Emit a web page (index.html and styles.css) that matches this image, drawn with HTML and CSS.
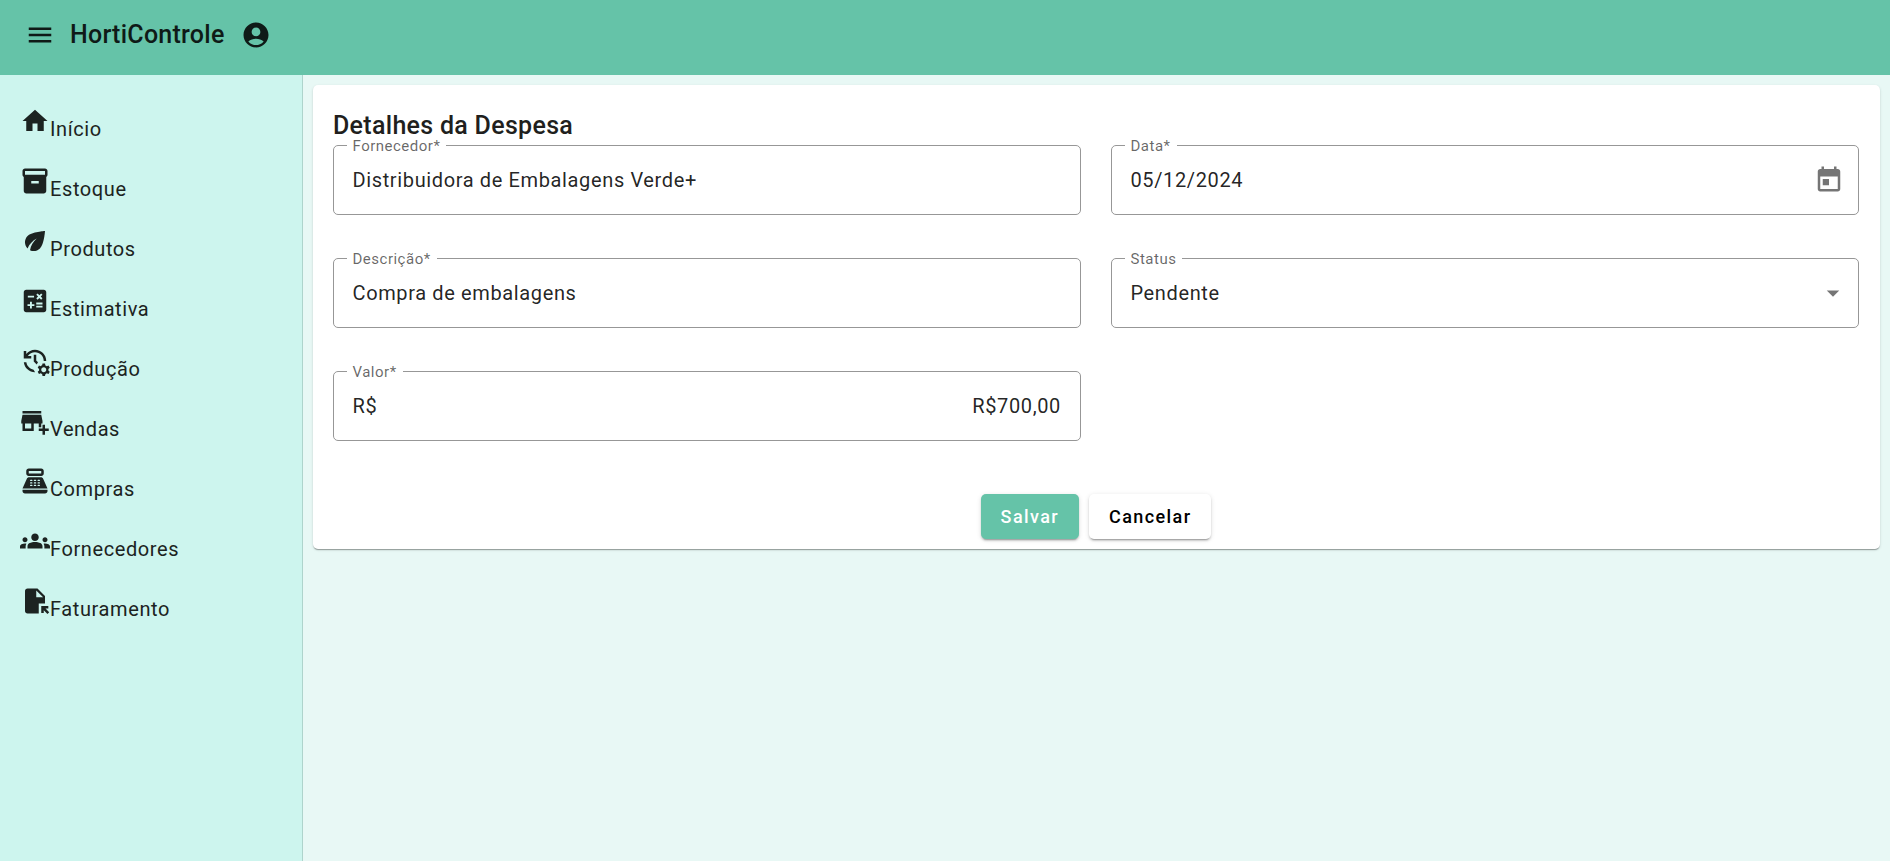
FILE: index.html
```html
<!DOCTYPE html>
<html lang="pt-BR">
<head>
<meta charset="utf-8">
<title>HortiControle</title>
<link rel="stylesheet" href="styles.css">
</head>
<body>
<header class="topbar">
  <svg class="icon" viewBox="0 0 24 24"><path d="M3 18h18v-2H3v2zm0-5h18v-2H3v2zm0-7v2h18V6H3z"/></svg>
  <span class="brand">HortiControle</span>
  <svg class="icon" viewBox="0 0 24 24"><path d="M12 2C6.48 2 2 6.48 2 12s4.48 10 10 10 10-4.48 10-10S17.52 2 12 2zm0 4c1.93 0 3.5 1.57 3.5 3.5S13.93 13 12 13s-3.5-1.57-3.5-3.5S10.07 6 12 6zm0 14c-2.03 0-4.43-.82-6.14-2.88C7.55 15.8 9.68 15 12 15s4.45.8 6.14 2.12C16.43 19.18 14.03 20 12 20z"/></svg>
</header>
<div class="shell">
  <nav class="sidebar">
    <a class="nav-item"><svg class="icon" viewBox="0 0 24 24"><path d="M10 20v-6h4v6h5v-8h3L12 3 2 12h3v8z"/></svg><span>Início</span></a>
    <a class="nav-item"><svg class="icon" viewBox="0 0 24 24"><path d="M20 2H4c-1 0-2 .9-2 2v3.01c0 .72.43 1.34 1 1.69V20c0 1.1 1.1 2 2 2h14c.9 0 2-.9 2-2V8.7c.57-.35 1-.97 1-1.69V4c0-1.1-1-2-2-2zm-5 12H9v-2h6v2zm5-7H4V4l16-.02V7z"/></svg><span>Estoque</span></a>
    <a class="nav-item"><svg class="icon" viewBox="0 0 24 24"><path d="M6.05 8.05c-2.73 2.73-2.73 7.15-.02 9.88 1.47-3.4 4.09-6.24 7.36-7.93-2.77 2.34-4.71 5.61-5.39 9.32 2.6 1.23 5.8.78 7.95-1.37C19.43 14.47 20 4 20 4S9.53 4.57 6.05 8.05z"/></svg><span>Produtos</span></a>
    <a class="nav-item"><svg class="icon" viewBox="0 0 24 24"><path d="M19 3H5c-1.1 0-2 .9-2 2v14c0 1.1.9 2 2 2h14c1.1 0 2-.9 2-2V5c0-1.1-.9-2-2-2zm-5.97 4.06L14.09 6l1.41 1.41L16.91 6l1.06 1.06-1.41 1.41 1.41 1.41-1.06 1.06-1.41-1.4-1.41 1.41-1.06-1.06 1.41-1.41-1.41-1.42zm-6.78.66h5v1.5h-5v-1.5zM11.5 16h-2v2H8v-2H6v-1.5h2v-2h1.5v2h2V16zm6.5 1.25h-5v-1.5h5v1.5zm0-2.5h-5v-1.5h5v1.5z"/></svg><span>Estimativa</span></a>
    <a class="nav-item"><svg class="icon" viewBox="0 0 24 24"><path d="M22.69 18.37l1.14-1-1-1.73-1.45.49c-.32-.27-.68-.48-1.08-.63L20 14h-2l-.3 1.49c-.4.15-.76.36-1.08.63l-1.45-.49-1 1.73 1.14 1c-.08.5-.08.76 0 1.26l-1.14 1 1 1.73 1.45-.49c.32.27.68.48 1.08.63L18 24h2l.3-1.49c.4-.15.76-.36 1.08-.63l1.45.49 1-1.73-1.14-1c.08-.51.08-.77 0-1.27zM19 21c-1.1 0-2-.9-2-2s.9-2 2-2 2 .9 2 2-.9 2-2 2zM11 7v5.41l2.36 2.36 1.04-1.79-1.4-1.39V7h-2zm10 5c0-4.97-4.03-9-9-9-2.83 0-5.35 1.32-7 3.36V4H3v6h6V8H6.26C7.53 6.19 9.63 5 12 5c3.86 0 7 3.14 7 7h2zm-10.14 6.91c-2.99-.49-5.35-2.9-5.78-5.91H3.06c.5 4.5 4.31 8 8.94 8h.07l-1.21-2.09z"/></svg><span>Produção</span></a>
    <a class="nav-item"><svg class="icon" viewBox="0 0 24 24"><path d="M15 17h2v-3h1v-2l-1-5H2l-1 5v2h1v6h9v-6h4v3zm-6 1H4v-4h5v4zM2 4h15v2H2z"/><path d="M20 18v-3h-2v3h-3v2h3v3h2v-3h3v-2z"/></svg><span>Vendas</span></a>
    <a class="nav-item"><svg class="icon" viewBox="0 0 24 24"><path d="M17 2H7c-1.1 0-2 .9-2 2v2c0 1.1.9 2 2 2h10c1.1 0 2-.9 2-2V4c0-1.1-.9-2-2-2zm0 4H7V4h10v2zm3 16H4c-1.1 0-2-.9-2-2v-1h20v1c0 1.1-.9 2-2 2zm-1.47-11.81C18.21 9.47 17.49 9 16.7 9H7.3c-.79 0-1.51.47-1.83 1.19L2 18h20l-3.47-7.81zM9.5 16h-1c-.28 0-.5-.22-.5-.5s.22-.5.5-.5h1c.28 0 .5.22.5.5s-.22.5-.5.5zm0-2h-1c-.28 0-.5-.22-.5-.5s.22-.5.5-.5h1c.28 0 .5.22.5.5s-.22.5-.5.5zm0-2h-1c-.28 0-.5-.22-.5-.5s.22-.5.5-.5h1c.28 0 .5.22.5.5s-.22.5-.5.5zm3 4h-1c-.28 0-.5-.22-.5-.5s.22-.5.5-.5h1c.28 0 .5.22.5.5s-.22.5-.5.5zm0-2h-1c-.28 0-.5-.22-.5-.5s.22-.5.5-.5h1c.28 0 .5.22.5.5s-.22.5-.5.5zm0-2h-1c-.28 0-.5-.22-.5-.5s.22-.5.5-.5h1c.28 0 .5.22.5.5s-.22.5-.5.5zm3 4h-1c-.28 0-.5-.22-.5-.5s.22-.5.5-.5h1c.28 0 .5.22.5.5s-.22.5-.5.5zm0-2h-1c-.28 0-.5-.22-.5-.5s.22-.5.5-.5h1c.28 0 .5.22.5.5s-.22.5-.5.5zm0-2h-1c-.28 0-.5-.22-.5-.5s.22-.5.5-.5h1c.28 0 .5.22.5.5s-.22.5-.5.5z"/></svg><span>Compras</span></a>
    <a class="nav-item"><svg class="icon" viewBox="0 0 24 24"><path d="M12 12.75c1.63 0 3.07.39 4.24.9 1.08.48 1.76 1.56 1.76 2.73V18H6v-1.61c0-1.18.68-2.26 1.76-2.73 1.17-.52 2.61-.91 4.24-.91zM4 13c1.1 0 2-.9 2-2s-.9-2-2-2-2 .9-2 2 .9 2 2 2zm1.13 1.1c-.37-.06-.74-.1-1.13-.1-.99 0-1.93.21-2.78.58C.48 14.9 0 15.62 0 16.43V18h4.5v-1.61c0-.83.23-1.61.63-2.29zM20 13c1.1 0 2-.9 2-2s-.9-2-2-2-2 .9-2 2 .9 2 2 2zm4 3.43c0-.81-.48-1.53-1.22-1.85-.85-.37-1.79-.58-2.78-.58-.39 0-.76.04-1.13.1.4.68.63 1.46.63 2.29V18H24v-1.57zM12 6c1.66 0 3 1.34 3 3s-1.34 3-3 3-3-1.34-3-3 1.34-3 3-3z"/></svg><span>Fornecedores</span></a>
    <a class="nav-item"><svg class="icon" viewBox="0 0 24 24"><path d="M14 2H6c-1.1 0-1.99.9-1.99 2L4 20c0 1.1.89 2 1.99 2H15v-8h5V8l-6-6zm-1 7V3.5L18.5 9H13zm4 12.66V16h5.66v2h-2.24l2.95 2.95-1.41 1.41L19 19.41v2.24h-2z"/></svg><span>Faturamento</span></a>
  </nav>
  <main class="content">
    <section class="card">
      <h1 class="card-title">Detalhes da Despesa</h1>
      <div class="form-grid">
        <div class="field"><label class="field-label">Fornecedor*</label><span class="field-value">Distribuidora de Embalagens Verde+</span></div>
        <div class="field"><label class="field-label">Data*</label><span class="field-value">05/12/2024</span><svg class="icon field-icon" viewBox="0 0 24 24"><path d="M19 4h-1V2h-2v2H8V2H6v2H5c-1.11 0-1.99.9-1.99 2L3 20c0 1.1.89 2 2 2h14c1.1 0 2-.9 2-2V6c0-1.1-.9-2-2-2zm0 16H5V10h14v10zM7 12h5v5H7z"/></svg></div>
        <div class="field"><label class="field-label">Descrição*</label><span class="field-value">Compra de embalagens</span></div>
        <div class="field"><label class="field-label">Status</label><span class="field-value">Pendente</span><svg class="icon field-arrow" viewBox="0 0 24 24"><path d="M7 10l5 5 5-5z"/></svg></div>
        <div class="field"><label class="field-label">Valor*</label><span class="field-value">R$</span><span class="field-value field-amount">R$700,00</span></div>
      </div>
      <div class="actions">
        <button class="btn btn-primary">Salvar</button>
        <button class="btn btn-secondary">Cancelar</button>
      </div>
    </section>
  </main>
</div>
</body>
</html>
```

FILE: styles.css
```css
* { box-sizing: border-box; }
html, body { height: 100%; }
body {
  margin: 0;
  display: flex;
  flex-direction: column;
  font-family: Roboto, "Liberation Sans", sans-serif;
  color: rgba(0, 0, 0, 0.87);
  background: #e8f8f5;
  overflow: hidden;
}
.icon { width: 30px; height: 30px; fill: currentColor; flex: none; display: block; }
.topbar {
  height: 75px;
  flex: none;
  display: flex;
  align-items: center;
  padding: 0 25px 5px;
  background: #65c3a8;
  color: #0f1a17;
}
.brand { margin: 0 16px 0 15px; font-size: 25px; font-weight: 500; line-height: 30px; letter-spacing: 0.25px; }
.shell { flex: 1; display: flex; min-height: 0; }
.sidebar {
  width: 303px;
  flex: none;
  padding-top: 31px;
  background: #cdf5ee;
  border-right: 1px solid #aed4cc;
}
.nav-item {
  height: 60px;
  padding-left: 20px;
  display: flex;
  align-items: baseline;
  font-size: 20px;
  letter-spacing: 0.6px;
  color: #1c2321;
}
.content { flex: 1; padding: 10px; min-width: 0; }
.card {
  background: #fff;
  border-radius: 5px;
  padding: 21px 21px 10px 20px;
  box-shadow: 0 2px 1px -1px rgba(0,0,0,.2), 0 1px 1px 0 rgba(0,0,0,.14), 0 1px 3px 0 rgba(0,0,0,.12);
}
.card-title { margin: 0; font-size: 25px; font-weight: 500; line-height: 39px; letter-spacing: 0.3px; color: #211f1d; }
.form-grid {
  display: grid;
  grid-template-columns: 1fr 1fr;
  column-gap: 30px;
  row-gap: 43px;
}
.field {
  position: relative;
  height: 70px;
  padding: 0 19px 0 18.5px;
  display: flex;
  align-items: center;
  justify-content: space-between;
  border: 1px solid #979797;
  border-radius: 5px;
}
.field-label {
  position: absolute;
  left: 12.5px;
  top: -9px;
  padding: 0 6px;
  background: #fff;
  font-size: 15px;
  line-height: 18px;
  letter-spacing: 0.5px;
  color: rgba(0, 0, 0, 0.6);
}
.field-value { font-size: 20px; letter-spacing: 0.63px; line-height: 28px; color: rgba(0, 0, 0, 0.87); }
.field-icon, .field-arrow { color: rgba(0, 0, 0, 0.54); }
.field-icon { margin: 0 -5px 3px 0; }
.field-arrow { margin-right: -9px; }
.actions { margin-top: 53px; display: flex; justify-content: center; gap: 10px; }
.btn {
  height: 45px;
  padding: 0 20px;
  border: 0;
  border-radius: 5px;
  font: 500 18px Roboto, sans-serif;
  letter-spacing: 1.4px;
  box-shadow: 0 3px 1px -2px rgba(0,0,0,.2), 0 2px 2px 0 rgba(0,0,0,.14), 0 1px 5px 0 rgba(0,0,0,.12);
}
.btn-primary { background: #65c3a8; color: #fff; }
.btn-secondary { background: #fff; color: #000; }
```
